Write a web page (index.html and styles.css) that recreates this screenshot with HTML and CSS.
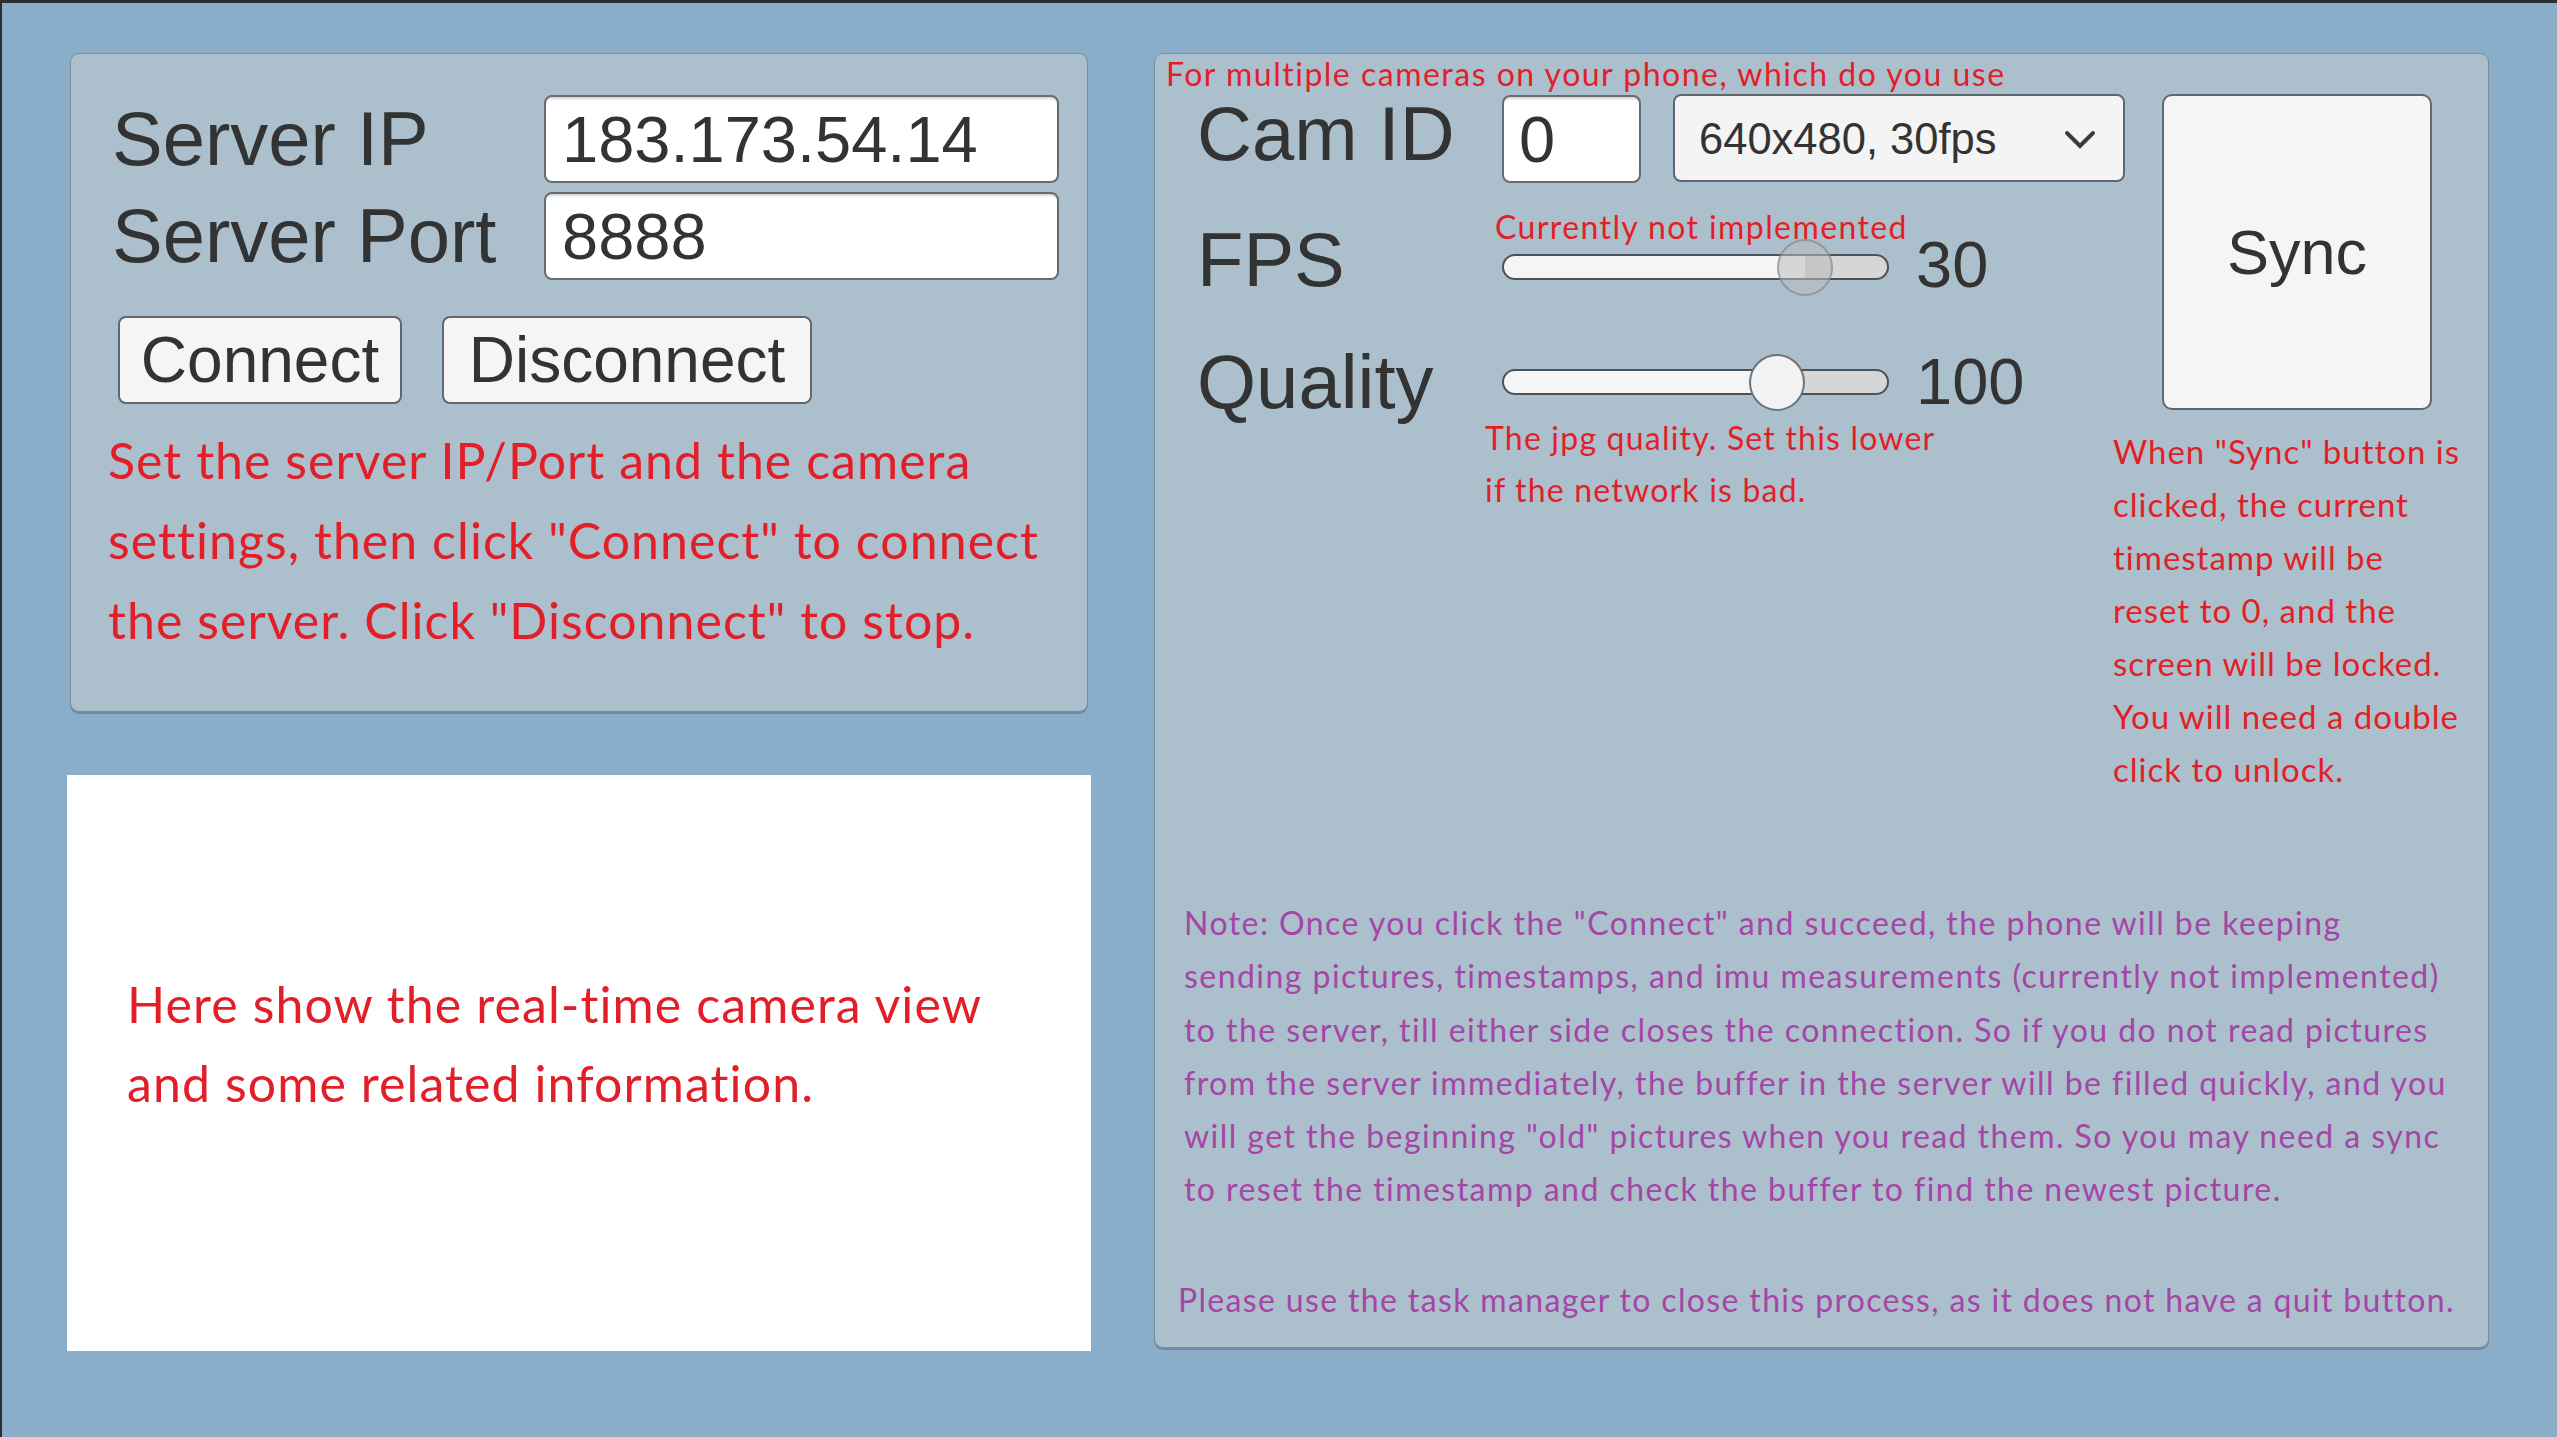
FILE: index.html
```html
<!DOCTYPE html>
<html lang="en">
<head>
<meta charset="utf-8">
<title>Camera Streamer</title>
<link rel="stylesheet" href="styles.css">
</head>
<body>
<div class="app">
  <div class="left-col">
    <section class="panel server-panel">
      <div class="field-grid">
        <span class="big-label">Server IP</span>
        <div class="text-input">183.173.54.14</div>
        <span class="big-label">Server Port</span>
        <div class="text-input">8888</div>
      </div>
      <div class="btn-row">
        <button class="btn btn-connect">Connect</button>
        <button class="btn btn-disconnect">Disconnect</button>
      </div>
      <p class="hint hint-left">Set the server IP/Port and the camera<br>settings, then click "Connect" to connect<br>the server. Click "Disconnect" to stop.</p>
    </section>
    <section class="camera-view">
      <p class="hint hint-view">Here show the real-time camera view<br>and some related information.</p>
    </section>
  </div>

  <section class="panel cam-panel">
    <div class="cam-top">
      <div class="cam-controls">
        <p class="caption">For multiple cameras on your phone, which do you use</p>
        <div class="row row-cam">
          <span class="big-label row-label">Cam ID</span>
          <div class="text-input cam-input">0</div>
          <div class="select">
            <span class="select-text">640x480, 30fps</span>
            <svg class="chevron" width="32" height="19" viewBox="0 0 32 19"><polyline points="3,3 16,16 29,3" fill="none" stroke="#3a3a3a" stroke-width="4" stroke-linecap="round" stroke-linejoin="miter"/></svg>
          </div>
        </div>
        <div class="row row-fps">
          <span class="big-label row-label fps-label">FPS</span>
          <div class="slider-block fps-block">
            <p class="small-note fps-note">Currently not implemented</p>
            <div class="track fps-track"><span class="thumb thumb-disabled"></span></div>
          </div>
          <span class="value fps-value">30</span>
        </div>
        <div class="row row-quality">
          <span class="big-label row-label">Quality</span>
          <div class="slider-block quality-block">
            <div class="track quality-track"><span class="thumb thumb-quality"></span></div>
            <p class="small-note quality-note">The jpg quality. Set this lower<br>if the network is bad.</p>
          </div>
          <span class="value quality-value">100</span>
        </div>
      </div>
      <div class="sync-col">
        <button class="btn sync-btn">Sync</button>
        <p class="sync-help">When "Sync" button is<br>clicked, the current<br>timestamp will be<br>reset to 0, and the<br>screen will be locked.<br>You will need a double<br>click to unlock.</p>
      </div>
    </div>
    <p class="note">Note: Once you click the "Connect" and succeed, the phone will be keeping<br>sending pictures, timestamps, and imu measurements (currently not implemented)<br>to the server, till either side closes the connection. So if you do not read pictures<br>from the server immediately, the buffer in the server will be filled quickly, and you<br>will get the beginning "old" pictures when you read them. So you may need a sync<br>to reset the timestamp and check the buffer to find the newest picture.</p>
    <p class="note quit">Please use the task manager to close this process, as it does not have a quit button.</p>
  </section>
</div>
</body>
</html>
```

FILE: styles.css
```css
html, body {
  margin: 0;
  padding: 0;
}

body {
  background: #8aaec9;
  overflow: hidden;
}

.app {
  box-sizing: border-box;
  width: 2557px;
  height: 1437px;
  border-top: 3px solid #2c3035;
  border-left: 2px solid #2c3035;
  background: #8aaec9;
  padding: 50px 0 0 65px;
  display: flex;
  align-items: flex-start;
  gap: 63px;
}

p { margin: 0; }

.left-col {
  width: 1024px;
  display: flex;
  flex-direction: column;
}

.panel {
  box-sizing: border-box;
  background: #acbfcc;
  border: 1px solid #7b8ea0;
  border-radius: 9px;
  box-shadow: 0 2px 0 #7489a0;
}

.server-panel {
  margin: 0 3px;
  height: 659px;
  padding: 41px 0 0 41px;
}

.big-label {
  font-family: "Liberation Sans", Arial, sans-serif;
  font-size: 76px;
  line-height: 80px;
  color: #333333;
  white-space: nowrap;
}

.field-grid {
  display: grid;
  grid-template-columns: 432px 515px;
  grid-auto-rows: 88px;
  row-gap: 9px;
  align-items: center;
}

.text-input {
  box-sizing: border-box;
  height: 88px;
  background: #ffffff;
  border: 2px solid #676c72;
  border-radius: 8px;
  box-shadow: inset 0 3px 2px -1px rgba(0, 0, 0, 0.16);
  font-family: "Liberation Sans", Arial, sans-serif;
  font-size: 65px;
  color: #333333;
  display: flex;
  align-items: center;
  padding-left: 16px;
}

.btn-row {
  display: flex;
  gap: 40px;
  margin: 36px 0 0 6px;
}

.btn {
  box-sizing: border-box;
  height: 88px;
  background: #f5f5f5;
  border: 2px solid #62676d;
  border-radius: 8px;
  font-family: "Liberation Sans", Arial, sans-serif;
  font-size: 64px;
  color: #333333;
  padding: 0;
  display: flex;
  align-items: center;
  justify-content: center;
}

.btn-connect { width: 284px; }
.btn-disconnect { width: 370px; }

.hint {
  font-family: Lato, "Open Sans", sans-serif;
  color: #e21f28;
  white-space: nowrap;
}

.hint-left {
  font-size: 50px;
  line-height: 80px;
  margin: 16px 0 0 -4px;
  letter-spacing: 1.05px;
}

.camera-view {
  box-sizing: border-box;
  margin-top: 63px;
  height: 576px;
  background: #ffffff;
  padding: 190px 0 0 60px;
}

.hint-view {
  font-size: 50px;
  line-height: 79px;
  letter-spacing: 1.1px;
}

/* right panel */
.cam-panel {
  width: 1335px;
  height: 1295px;
  padding: 0 0 0 11px;
}

.cam-top {
  display: flex;
  align-items: flex-start;
}

.cam-controls {
  width: 947px;
  flex: none;
}

.caption {
  font-family: Lato, "Open Sans", sans-serif;
  font-size: 32px;
  line-height: 40px;
  letter-spacing: 1.5px;
  color: #e21f28;
  white-space: nowrap;
}

.row {
  display: flex;
  align-items: flex-start;
}

.row-label {
  box-sizing: border-box;
  width: 336px;
  padding-left: 31px;
  flex: none;
}

.row-cam { height: 89px; }

.cam-input {
  width: 139px;
  margin-top: 1px;
  padding-left: 15px;
  flex: none;
}

.select {
  box-sizing: border-box;
  flex: none;
  width: 452px;
  height: 88px;
  margin-left: 32px;
  background: #f4f4f4;
  border: 2px solid #62676d;
  border-radius: 8px;
  display: flex;
  align-items: center;
  justify-content: space-between;
  padding: 0 27px 0 24px;
}

.select-text {
  font-family: "Liberation Sans", Arial, sans-serif;
  font-size: 43.5px;
  color: #333333;
  margin-top: 3px;
}

.chevron { display: block; margin-top: 2px; }

.row-fps { margin-top: 26px; }

.fps-label { margin-top: 11px; }

.slider-block {
  width: 386px;
  flex: none;
}

.small-note {
  font-family: Lato, "Open Sans", sans-serif;
  font-size: 32px;
  color: #e21f28;
  white-space: nowrap;
}

.fps-note {
  line-height: 36px;
  margin-left: -7px;
  letter-spacing: 1.4px;
}

.track {
  position: relative;
  box-sizing: border-box;
  width: 387px;
  border: 2px solid #4d5258;
  border-radius: 14px;
}

.fps-track {
  height: 26px;
  margin-top: 9px;
  background: linear-gradient(to right, #f5f5f5 0 301px, #d6d6d6 301px);
}

.quality-track {
  height: 26px;
  margin-top: 27px;
  background: linear-gradient(to right, #f5f5f5 0 273px, #d6d6d6 273px);
}

.thumb {
  position: absolute;
  box-sizing: border-box;
  width: 56px;
  height: 57px;
  border-radius: 50%;
}

.thumb-disabled {
  left: 273px;
  top: -17.5px;
  background: rgba(185, 188, 192, 0.55);
  border: 2px solid rgba(110, 115, 122, 0.5);
}

.thumb-quality {
  left: 245px;
  top: -17.5px;
  background: #f3f3f3;
  border: 2px solid #6e737a;
}

.quality-note {
  line-height: 52px;
  margin: 17px 0 0 -17px;
  letter-spacing: 1.2px;
}

.value {
  font-family: "Liberation Sans", Arial, sans-serif;
  font-size: 65px;
  line-height: 60px;
  color: #333333;
  margin-left: 28px;
}

.fps-value { margin-top: 26px; }
.quality-value { margin-top: 10px; }

.row-quality { margin-top: 42px; }

.sync-col {
  padding-top: 40px;
  flex: none;
}

.sync-btn {
  width: 270px;
  height: 316px;
  margin-left: 49px;
  border-radius: 10px;
  font-size: 63px;
}

.sync-help {
  font-family: Lato, "Open Sans", sans-serif;
  font-size: 33px;
  line-height: 53px;
  letter-spacing: 1px;
  color: #e21f28;
  white-space: nowrap;
  margin-top: 15px;
}

.note {
  font-family: Lato, "Open Sans", sans-serif;
  font-size: 32px;
  line-height: 53.3px;
  letter-spacing: 1.45px;
  color: #a546a7;
  white-space: nowrap;
  margin: 100px 0 0 18px;
}

.quit {
  margin: 57px 0 0 12px;
  letter-spacing: 1.35px;
}
```
